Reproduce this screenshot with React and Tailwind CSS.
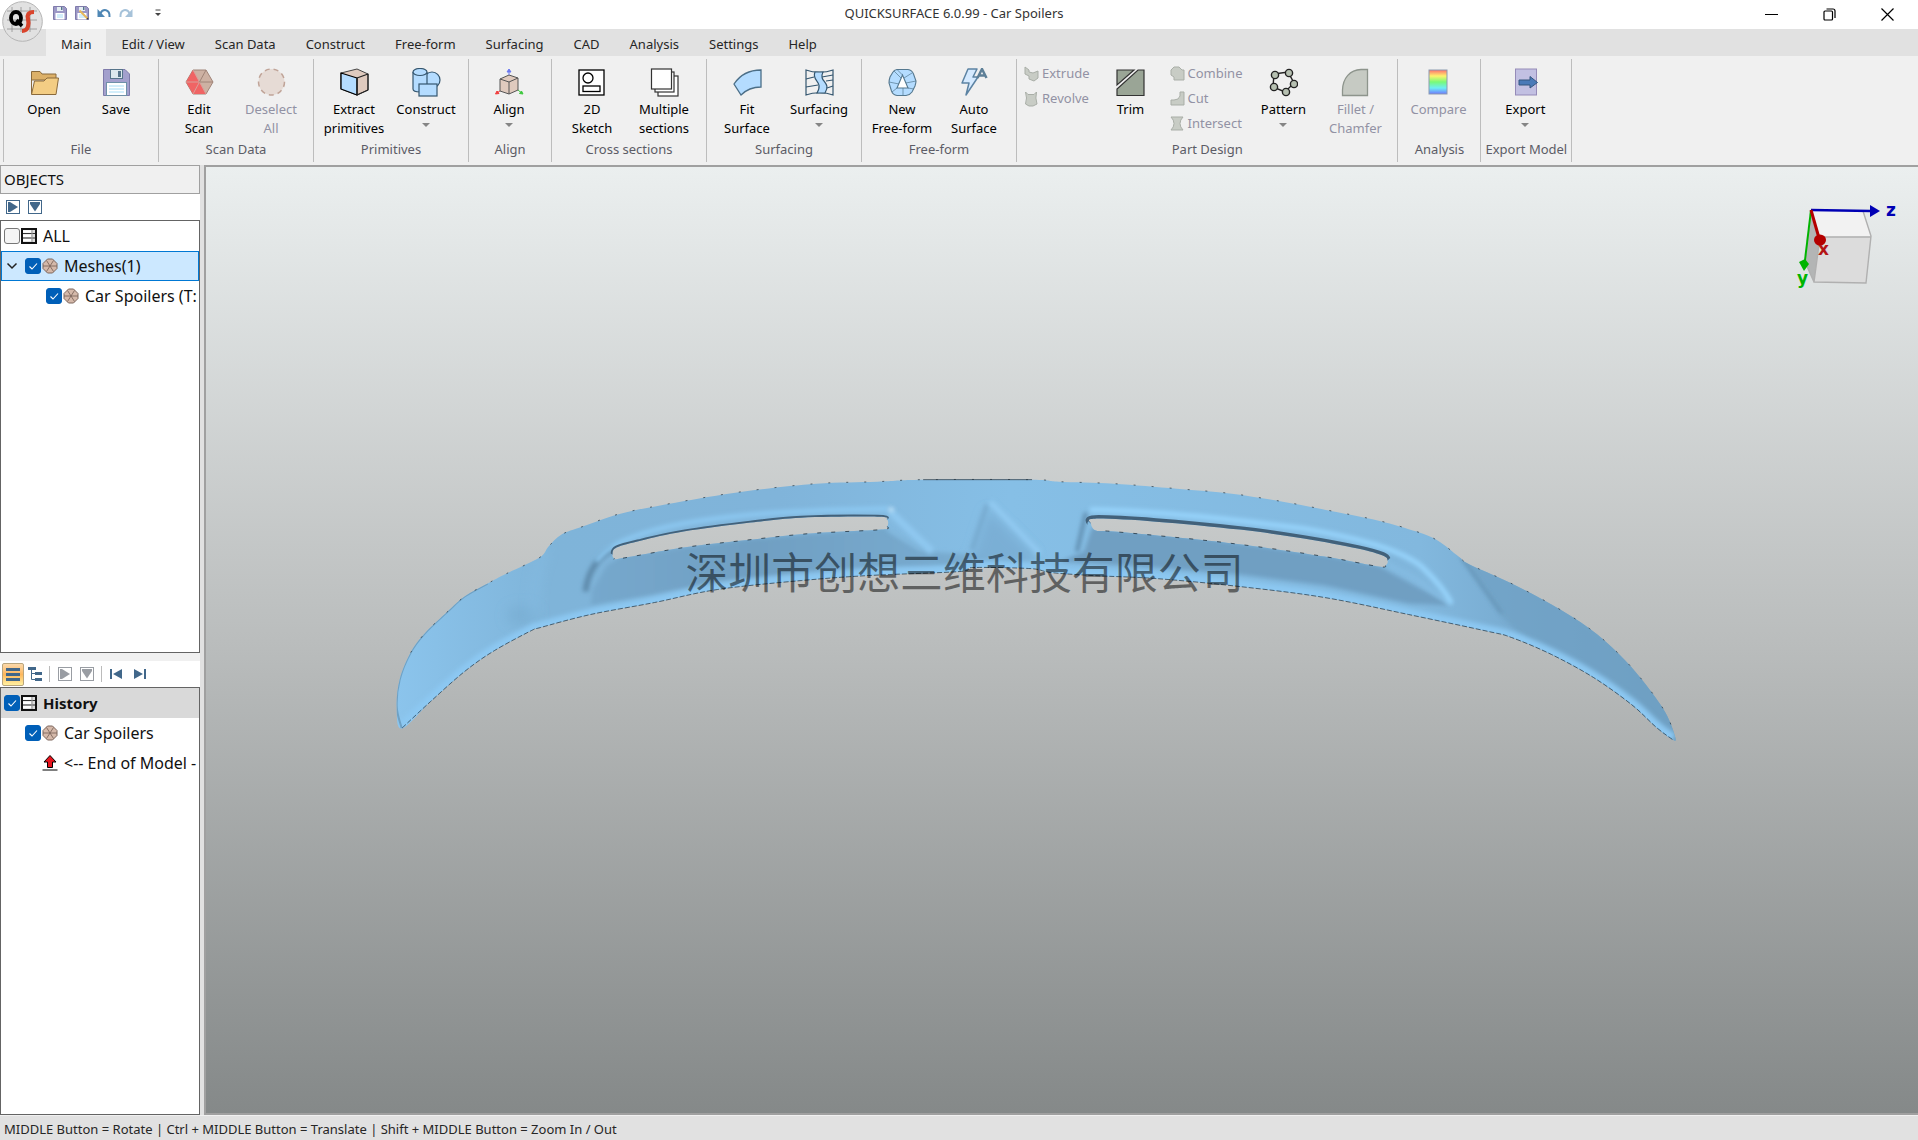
import React, { useState } from 'react';

// Smooth closed/open path through a list of points (Catmull-Rom)
const smooth = (pts, closed = false) => {
  const n = pts.length;
  const at = (i) => (closed ? pts[(i + n) % n] : pts[Math.max(0, Math.min(n - 1, i))]);
  let d = `M${pts[0][0]} ${pts[0][1]}`;
  const last = closed ? n : n - 1;
  for (let i = 0; i < last; i++) {
    const [p0, p1, p2, p3] = [at(i - 1), at(i), at(i + 1), at(i + 2)];
    const c1 = [p1[0] + (p2[0] - p0[0]) / 6, p1[1] + (p2[1] - p0[1]) / 6];
    const c2 = [p2[0] - (p3[0] - p1[0]) / 6, p2[1] - (p3[1] - p1[1]) / 6];
    d += `C${c1[0].toFixed(1)} ${c1[1].toFixed(1)} ${c2[0].toFixed(1)} ${c2[1].toFixed(1)} ${p2[0]} ${p2[1]}`;
  }
  return closed ? d + 'Z' : d;
};

const topEdge = [
  [401, 729], [396, 707], [399, 680], [410, 653], [424, 634], [447, 612], [464, 597], [487, 584], [506, 574],
  [539, 558], [548, 547], [561, 535], [582, 527], [620, 514], [675, 503], [742, 492], [816, 484], [877, 482],
  [923, 480], [1032, 480], [1059, 482], [1114, 484], [1177, 489], [1232, 494], [1283, 502], [1325, 510],
  [1379, 521], [1417, 532], [1438, 541], [1459, 557], [1470, 565], [1510, 583], [1552, 605], [1590, 629],
  [1619, 654], [1644, 682], [1666, 713], [1676, 738],
];
const bottomEdge = [
  [1673, 740], [1657, 728], [1632, 705], [1594, 678], [1552, 655], [1512, 638], [1489, 632], [1409, 615],
  [1325, 598], [1240, 587], [1156, 579], [1093, 576], [1051, 573], [1030, 569], [973, 568], [959, 572],
  [868, 576], [801, 581], [717, 590], [654, 603], [590, 615], [540, 628], [531, 631], [494, 651],
  [464, 672], [430, 702], [401, 729],
];
const leftSlotTop = [[612, 555], [616, 548], [641, 541], [683, 532], [750, 523], [801, 518], [877, 517], [887, 520]];
const leftSlotBottom = [[887, 527], [881, 530], [809, 534], [742, 541], [683, 548], [620, 559], [614, 559]];
const rightSlotTop = [[1091, 524], [1095, 519], [1156, 522], [1240, 530], [1304, 539], [1358, 549], [1383, 556], [1388, 561]];
const rightSlotBottom = [[1386, 566], [1379, 567], [1325, 557], [1257, 547], [1198, 540], [1114, 532], [1096, 531]];

const bodyPath = [
  smooth([...topEdge, ...bottomEdge.slice(0, -1)], true),
  smooth([...leftSlotTop, ...leftSlotBottom], true),
  smooth([...rightSlotTop, ...rightSlotBottom], true),
].join(' ');

const SpoilerModel = () => (
  <svg viewBox="206 167 1712 947" className="block h-full w-full" role="img" aria-label="Car Spoilers mesh">
    <defs>
      <clipPath id="body">
        <path d={bodyPath} clipRule="evenodd" />
      </clipPath>
      <linearGradient id="skin" gradientUnits="userSpaceOnUse" x1="396" y1="0" x2="1676" y2="0">
        <stop offset="0" stopColor="#8bc4ec" />
        <stop offset="0.12" stopColor="#7fb4d9" />
        <stop offset="0.3" stopColor="#80b4da" />
        <stop offset="0.48" stopColor="#86bfe6" />
        <stop offset="0.8" stopColor="#82b8de" />
        <stop offset="0.88" stopColor="#78abd0" />
        <stop offset="1" stopColor="#6e9fc1" />
      </linearGradient>
      <linearGradient id="shadeLeft" gradientUnits="userSpaceOnUse" x1="590" y1="0" x2="1000" y2="0">
        <stop offset="0" stopColor="#76a8cd" />
        <stop offset="0.4" stopColor="#709fc2" />
        <stop offset="1" stopColor="#7aaed3" />
      </linearGradient>
      <filter id="soft" filterUnits="userSpaceOnUse" x="380" y="460" width="1320" height="300"><feGaussianBlur stdDeviation="6" /></filter>
      <filter id="thin" filterUnits="userSpaceOnUse" x="380" y="460" width="1320" height="300"><feGaussianBlur stdDeviation="2" /></filter>
    </defs>
    <path d={bodyPath} fill="url(#skin)" fillRule="evenodd" />
    <g clipPath="url(#body)" fill="none">
      {/* lower blade in shade */}
      <path d="M592 590L606 566L622 556L742 540L884 528L925 552L990 556L962 566L868 568L801 573L717 582L654 595L590 606Z" fill="url(#shadeLeft)" filter="url(#thin)" />
      <path d="M1084 552L1092 528L1198 538L1325 556L1378 566L1452 606L1409 604L1325 586L1240 575L1156 568L1060 562Z" fill="#6f9fc2" filter="url(#thin)" />
      <ellipse cx="522" cy="616" rx="16" ry="10" fill="#77acd1" fillOpacity="0.6" filter="url(#soft)" />
      {/* centre */}
      <path d="M988 510L1034 555L1034 566L968 566L975 550Z" fill="#7aafd5" filter="url(#soft)" />
      <path d="M987 505L972 550" stroke="#76a9ce" strokeWidth="4" filter="url(#thin)" />
      <path d="M990 502L1040 554" stroke="#92caf2" strokeWidth="5" filter="url(#thin)" />
      {/* slot corners */}
      <path d="M890 512L932 552" stroke="#8fc8f0" strokeWidth="7" filter="url(#thin)" />
      <path d="M888 530L922 551" stroke="#83bae0" strokeWidth="3" filter="url(#thin)" />
      <path d="M1086 513L1077 552" stroke="#5f8cae" strokeWidth="4" filter="url(#thin)" />
      <path d="M614 549C598 556 587 572 585 592" stroke="#5e8bac" strokeWidth="6" filter="url(#thin)" />
      <path d="M1384 548C1420 558 1438 580 1452 604L1396 568Z" fill="#80b6dc" filter="url(#thin)" />
      <path d="M1390 566C1412 574 1430 588 1452 606" stroke="#86bde4" strokeWidth="3" filter="url(#thin)" />
      {/* bright rims over the slots */}
      <path d="M596 562C606 545 640 532 683 524C750 513 801 511 888 509" stroke="#8cc8f1" strokeWidth="5" filter="url(#thin)" />
      <path d="M1090 510C1160 511 1240 521 1304 529C1360 539 1400 550 1422 567C1438 582 1446 592 1452 604" stroke="#97d4fc" strokeWidth="5" filter="url(#thin)" />
      <circle cx="891" cy="510" r="2.500" fill="#c8e8fc" filter="url(#thin)" />
      <path d={smooth(leftSlotTop)} stroke="#42617a" strokeWidth="4" />
      <path d={smooth(rightSlotTop)} stroke="#42617a" strokeWidth="7" />
      {/* fold on the right wing */}
      <path d="M1461 556L1504 619L1520 634L1676 745L1676 700L1560 600L1470 562Z" fill="#6fa0c3" opacity="0.7" filter="url(#thin)" />
      <path d="M1462 558L1502 614" stroke="#5d8aab" strokeWidth="2" filter="url(#thin)" />
      <path d="M545 550C535 570 532 600 534 620" stroke="#86bde4" strokeWidth="4" filter="url(#soft)" />
      <path d={smooth(bottomEdge)} stroke="#8cc8f2" strokeWidth="12" filter="url(#thin)" />
      <path d={smooth(topEdge.slice(0, 8))} stroke="#6fa1c4" strokeWidth="2" />
    </g>
    <g fill="none" stroke="#24343f" strokeWidth="1">
      <path d={smooth(bottomEdge)} strokeDasharray="5 2" strokeOpacity="0.7" />
      <path d={smooth(topEdge.slice(3))} strokeDasharray="2 16" strokeOpacity="0.7" />
      <path d="M923 480H1032" strokeOpacity="0.7" />
      <path d={smooth(leftSlotBottom)} strokeDasharray="4 10" strokeOpacity="0.8" />
      <path d={smooth(rightSlotBottom)} strokeDasharray="4 10" strokeOpacity="0.8" />
    </g>
    <text x="685" y="589" fontSize="43" fill="#000" fillOpacity="0.5" className="font-['Noto_Sans_CJK_SC',sans-serif]">
      深圳市创想三维科技有限公司
    </text>
  </svg>
);

const AxisCube = () => (
  <svg viewBox="1790 195 112 100" className="absolute right-4 top-7 h-25 w-28" aria-label="View orientation">
    <path d="M1811 210L1863 211L1871 236L1820 237Z" fill="#f2f2f2" />
    <path d="M1811 210L1820 237L1814 282L1805 262Z" fill="#b3b5b5" />
    <path d="M1820 237H1871L1866 283L1814 282Z" fill="#dcdcdc" />
    <path d="M1863 211L1871 236L1866 283L1814 282L1820 237H1871M1805 262L1814 282" fill="none" stroke="#b0b0b0" strokeWidth="1.4" />
    <path d="M1811 210L1805 260" stroke="#00b400" strokeWidth="2" />
    <path d="M1799 262L1805 259L1809 264L1804 271Z" fill="#00b400" />
    <path d="M1811 210L1871 211" stroke="#0000b4" strokeWidth="2.4" />
    <path d="M1870 205L1880 211L1870 217Z" fill="#0000b4" />
    <path d="M1811 210L1819 238" stroke="#b40000" strokeWidth="3" />
    <ellipse cx="1820" cy="240" rx="6" ry="5.5" fill="#b40000" />
    <g className="font-['DejaVu_Sans',sans-serif]" fontSize="17" fontWeight="bold">
      <text x="1886" y="216" fill="#0000b4">z</text>
      <text x="1818" y="255" fill="#b41414">x</text>
      <text x="1797" y="284" fill="#00b400">y</text>
    </g>
  </svg>
);

const icons = {
  open: (
    <g stroke="#8a6a3c" strokeWidth="1">
      <path d="M1.500 26V3.500H10L12 6H26V12H1.500Z" fill="#dcb068" />
      <path d="M1.500 26.500L4.500 13H14L17 10H28.500L26 26.500Z" fill="#f3cd84" />
    </g>
  ),
  save: (
    <g>
      <path d="M1.500 1.500H23L27.500 6V27.500H1.500Z" fill="#a3a0cd" stroke="#7f7bab" />
      <rect x="8.500" y="1.500" width="12" height="9" fill="#dde8ee" stroke="#56748a" />
      <rect x="16" y="3" width="3" height="6" fill="#56748a" />
      <rect x="4.500" y="14.500" width="20" height="13" fill="#fff" stroke="#6f91a8" />
      <path d="M7 18H22M7 21H22M7 24H22" stroke="#a6dcf5" />
    </g>
  ),
  editScan: (
    <g strokeWidth="1">
      <path d="M8 2H21L28 14L21 26H8L1 14Z" fill="#cdb1a3" stroke="#a08478" />
      <path d="M8 2L14.500 14L21 26H8L1 14Z" fill="#f06464" />
      <path d="M8 2L14.500 14L8 26M1 14H14.500L21 26" fill="none" stroke="#d9a09a" />
      <path d="M21 2L14.500 14H28" fill="none" stroke="#a08478" />
    </g>
  ),
  deselect: <circle cx="14.500" cy="14" r="13" fill="#e6dbd5" stroke="#c0a498" strokeWidth="1.500" strokeDasharray="5 4" />,
  extract: (
    <g strokeLinejoin="round">
      <path d="M1 5L17 1L28 6V22L17 27L1 21Z" fill="#dfcabe" stroke="#444" />
      <path d="M1 5L17 10V27L1 21Z" fill="#b4dcff" stroke="#000" strokeWidth="1.300" />
      <path d="M17 10L28 6V22L17 27Z" fill="none" stroke="#222" strokeWidth="1.200" />
    </g>
  ),
  construct: (
    <g fill="#b4dcff" stroke="#34566f" strokeWidth="1.200">
      <circle cx="20" cy="12" r="8" />
      <path d="M1 4V21C1 25 15 25 15 21V4" />
      <ellipse cx="8" cy="4" rx="7" ry="3.500" />
      <rect x="7" y="16" width="18" height="12" />
    </g>
  ),
  align: (
    <g>
      <path d="M5 11L14 7L23 10V22L14 26L5 23Z" fill="#dfcabe" stroke="#555" />
      <path d="M5 11L14 14L23 10M14 14V26" fill="none" stroke="#555" />
      <path d="M14 7V3M14 1L16 4H12Z" fill="#6a78f0" stroke="#6a78f0" />
      <path d="M5 23L2.500 24.500M.5 26L2 23L4 25.500Z" fill="#f03c3c" stroke="#f03c3c" />
      <path d="M23 22L26 24.500M28 26L26.500 23L24.500 25.500Z" fill="#3cc83c" stroke="#3cc83c" />
    </g>
  ),
  sketch: (
    <g fill="#fff" stroke="#000" strokeWidth="1.300">
      <rect x="1" y="2" width="25" height="25" />
      <circle cx="10" cy="10" r="5" />
      <rect x="5" y="18" width="17" height="5.500" />
    </g>
  ),
  sections: (
    <g fill="#fff" stroke="#333" strokeWidth="1.200">
      <rect x="8" y="8" width="20" height="20" />
      <rect x="5" y="4" width="19" height="20" />
      <rect x="1.500" y="1" width="20" height="20" />
    </g>
  ),
  fit: <path d="M1 16C7 7 16 2 28 2V19C19 19 13 22 8 27Z" fill="#b4dcff" stroke="#4b6e87" strokeWidth="1.300" />,
  surfacing: (
    <g fill="none" stroke="#34566f" strokeWidth="1.200">
      <path d="M1 2C9 5 20 5 28 2V27C20 24 9 24 1 27Z" />
      <path d="M10 4C6 13 19 13 12 25H20C27 14 13 14 18 4Z" fill="#b4dcff" />
      <path d="M1 11L9 9M1 19L13 17M17 9L28 7M21 13L28 12M22 20L28 18" />
    </g>
  ),
  freeform: (
    <g fill="#b4dcff" stroke="#55788f" strokeWidth="1.100">
      <path d="M9 1.500H20Q24 2 25.500 6L28 13Q28 15 27 18L24 24Q22 27 18 27.500H9Q5 27 3.500 23L1 15Q1 12 2 9L5 4Q6 2 9 1.500Z" />
      <path d="M14.500 7L20 20H9Z" fill="#fff" />
      <path d="M14.500 7L9 1.500M16 10L24 5M18 15L28 13M20 20L26 21M15 20V27M9 20L4 24M11 16L1 14M13 10L6 3" fill="none" strokeWidth="0.700" />
    </g>
  ),
  auto: (
    <g>
      <path d="M8 1H17L13 9H18L6 27L9 15H2Z" fill="#d5eaff" stroke="#5c83a3" strokeWidth="1.500" strokeLinejoin="round" />
      <path d="M17.500 10L22 1L26.500 10M19 7.500H25" fill="none" stroke="#5d7f97" strokeWidth="2.500" />
    </g>
  ),
  trim: (
    <g fill="#9aa596" stroke="#333" strokeWidth="1.200">
      <path d="M1 2H18L1 17Z" />
      <path d="M28 2V27.500H1V21L22 2Z" />
    </g>
  ),
  pattern: (
    <g fill="#b6c0b1" stroke="#222" strokeWidth="1.400">
      <path d="M5 6L19 4L25 15L16 24L4 19Z" fill="none" />
      {[[6, 7], [20, 5], [25, 16], [17, 24], [5, 19]].map(([x, y]) => <circle key={x} cx={x} cy={y} r="3.600" />)}
    </g>
  ),
  fillet: <path d="M1.500 27.500V22C2 10 9 2 20 1.500H26.500V27.500Z" fill="#c6cac3" stroke="#8d948c" strokeWidth="1.300" />,
  compare: (
    <g>
      <defs>
        <linearGradient id="heat" x1="0" y1="0" x2="0" y2="1">
          <stop offset="0" stopColor="#ff6e6e" />
          <stop offset="0.25" stopColor="#fdf36e" />
          <stop offset="0.5" stopColor="#78fa78" />
          <stop offset="0.75" stopColor="#6eeef5" />
          <stop offset="1" stopColor="#6e78ff" />
        </linearGradient>
      </defs>
      <rect x="5" y="2" width="18" height="24" fill="url(#heat)" stroke="#8b9bb0" />
    </g>
  ),
  exportModel: (
    <g>
      <rect x="4.500" y="1" width="21" height="26" fill="#c2c0e2" stroke="#958bb8" />
      <path d="M8 12H19V8.500L26.500 14.500L19 20V17H8Z" fill="#4a7ab8" stroke="#34567f" />
    </g>
  ),
};

const smallIcons = {
  extrude: <path d="M1 1L5 4V6L9 7L14 5V12L10 15L5 13V10L1 8Z" />,
  revolve: <path d="M1.500 1L4 3.500H10L12.500 1Q11 7 13 13L9 15H5L1.500 13Q3.500 7 1.500 1Z" />,
  combine: <path d="M4 1H9L12 4H14V14H4V11L1 9V4Z" />,
  cut: <path d="M10 1H14V14H1V9H4Q9 9 10 5Z" />,
  intersect: <path d="M1 1H13Q10 4 10 7.500T13 14H1Q4 11 4 7.500T1 1Z" />,
};

const ribbon = [
  { name: 'File', items: [{ icon: 'open', text: ['Open'] }, { icon: 'save', text: ['Save'] }] },
  { name: 'Scan Data', items: [{ icon: 'editScan', text: ['Edit', 'Scan'] }, { icon: 'deselect', text: ['Deselect', 'All'], disabled: true }] },
  { name: 'Primitives', items: [{ icon: 'extract', text: ['Extract', 'primitives'] }, { icon: 'construct', text: ['Construct'], menu: true }] },
  { name: 'Align', items: [{ icon: 'align', text: ['Align'], menu: true }] },
  { name: 'Cross sections', items: [{ icon: 'sketch', text: ['2D', 'Sketch'] }, { icon: 'sections', text: ['Multiple', 'sections'] }] },
  { name: 'Surfacing', items: [{ icon: 'fit', text: ['Fit', 'Surface'] }, { icon: 'surfacing', text: ['Surfacing'], menu: true }] },
  { name: 'Free-form', items: [{ icon: 'freeform', text: ['New', 'Free-form'] }, { icon: 'auto', text: ['Auto', 'Surface'] }] },
  {
    name: 'Part Design',
    items: [
      { stack: [['extrude', 'Extrude'], ['revolve', 'Revolve']] },
      { icon: 'trim', text: ['Trim'] },
      { stack: [['combine', 'Combine'], ['cut', 'Cut'], ['intersect', 'Intersect']] },
      { icon: 'pattern', text: ['Pattern'], menu: true },
      { icon: 'fillet', text: ['Fillet /', 'Chamfer'], disabled: true },
    ],
  },
  { name: 'Analysis', items: [{ icon: 'compare', text: ['Compare'], disabled: true }] },
  { name: 'Export Model', items: [{ icon: 'exportModel', text: ['Export'], menu: true }] },
];

const tabs = ['Main', 'Edit / View', 'Scan Data', 'Construct', 'Free-form', 'Surfacing', 'CAD', 'Analysis', 'Settings', 'Help'];

const RibbonButton = ({ icon, text, menu, disabled }) => (
  <button disabled={disabled} className="flex w-18 flex-col items-center leading-[19px] text-black disabled:text-[#9292a4]">
    <svg viewBox="0 0 29 29" className="mb-[3px] h-[29px] w-[29px]">{icons[icon]}</svg>
    {text.map((line) => <span key={line}>{line}</span>)}
    {menu && <span className="mt-1 border-x-4 border-t-4 border-x-transparent border-t-[#858585]" />}
  </button>
);

const ButtonStack = ({ items }) => (
  <div className="-mt-[7px] flex flex-col pl-[3px] pr-[5px]">
    {items.map(([icon, label]) => (
      <button key={label} disabled className="flex h-[25px] items-center gap-[3px] text-[#9292a4]">
        <svg viewBox="0 0 15 16" className="h-4 w-[15px]" fill="#c8ccc5" stroke="#a9aea7">{smallIcons[icon]}</svg>
        {label}
      </button>
    ))}
  </div>
);

const RibbonGroup = ({ name, items }) => (
  <section className="flex flex-col items-center justify-between border-r border-[#bdbdbd] px-[3px]">
    <div className="flex flex-1 pl-px pr-[3px] pt-[9px]">
      {items.map((item, i) => (item.stack
        ? <ButtonStack key={i} items={item.stack} />
        : <RibbonButton key={item.icon} {...item} />))}
    </div>
    <div className="px-px pb-1 leading-[18px] text-[#5c5c66]">{name}</div>
  </section>
);

const SaveGlyph = ({ edit }) => (
  <svg viewBox="0 0 14 14" className="h-[14px] w-[14px]">
    <path d="M.5.5H11.500L13.500 2.500V13.500H.5Z" fill="#9c98c6" stroke="#7f7bab" />
    <rect x="4" y="1" width="6" height="4" fill="#e4edf2" />
    <rect x="8" y="1" width="1.500" height="3" fill="#56748a" />
    <rect x="2.500" y="7" width="9" height="6.500" fill="#fff" />
    <path d="M4 9H10M4 11H10" stroke="#a6dcf5" />
    {edit && <path d="M4.500 4.500L12.500 12.500" stroke="#e8b75a" strokeWidth="2" />}
    {edit && <path d="M11.500 13L13.500 13.500L13 11.500Z" fill="#333" />}
  </svg>
);

const UndoGlyph = () => (
  <svg viewBox="0 0 14 12" className="h-3 w-[14px]" fill="none">
    <path d="M3 7C6 1 13 2 12.500 10" stroke="#4f87b5" strokeWidth="2" />
    <path d="M.5 2V10H8Z" fill="#4f87b5" />
  </svg>
);

const Logo = () => (
  <svg viewBox="0 0 42 42" className="absolute left-[2px] top-px z-10 h-[42px] w-[42px]">
    <circle cx="20.500" cy="20.500" r="19.800" fill="#e1e1e1" stroke="#b5b5b5" />
    <path d="M10 6V31M19 6V31M28 6V31M5 10H35M5 19H35M5 28H35" stroke="#8f8f8f" strokeWidth="0.800" />
    <ellipse cx="14" cy="17" rx="5" ry="6" fill="none" stroke="#000" strokeWidth="3.800" />
    <path d="M14.500 19L20 25" stroke="#000" strokeWidth="3.600" />
    <path d="M32 11C26 11 25 14 26 18S27 30 20 30" fill="none" stroke="#d9442c" strokeWidth="4.200" />
  </svg>
);

const TitleBar = () => (
  <header className="grid h-[29px] shrink-0 grid-cols-[1fr_auto_1fr] items-center bg-white pr-[10px]">
    <div className="flex items-center gap-2 pb-[3px] pl-[53px]">
      <button aria-label="Save"><SaveGlyph /></button>
      <button aria-label="Save as"><SaveGlyph edit /></button>
      <button aria-label="Undo"><UndoGlyph /></button>
      <button aria-label="Redo" className="-scale-x-100 opacity-50"><UndoGlyph /></button>
      <button aria-label="Customize toolbar" className="ml-3.5">
        <svg viewBox="0 0 6 8" className="h-2 w-[6px]"><path d="M.5 1H5.500" stroke="#444" /><path d="M0 4H6L3 7Z" fill="#444" /></svg>
      </button>
    </div>
    <h1 className="pb-0.5 text-[#333]">QUICKSURFACE 6.0.99 - Car Spoilers</h1>
    <div className="flex items-center justify-end gap-[45px] pr-[14px]">
      <button aria-label="Minimize"><svg viewBox="0 0 13 13" className="h-[13px] w-[13px]"><path d="M0 6.500H13" stroke="#000" /></svg></button>
      <button aria-label="Restore">
        <svg viewBox="0 0 13 13" className="h-[13px] w-[13px]" fill="none" stroke="#000" strokeWidth="1.200">
          <rect x="1" y="3" width="8.500" height="9" rx="1" />
          <path d="M3.500 1H10Q12 1 12 3V10" />
        </svg>
      </button>
      <button aria-label="Close"><svg viewBox="0 0 13 13" className="h-[13px] w-[13px]"><path d="M.5.5L12.500 12.500M12.500.5L.5 12.500" stroke="#000" strokeWidth="1.200" /></svg></button>
    </div>
  </header>
);

const CheckBox = ({ label, checked, onChange }) => (
  <span className="relative h-4 w-4 shrink-0">
    <input
      type="checkbox"
      aria-label={label}
      checked={checked}
      onChange={onChange}
      className="peer block h-4 w-4 appearance-none rounded-[3px] border border-[#777] bg-[#f5f5f5] checked:border-[#005fb8] checked:bg-[#005fb8]"
    />
    <svg viewBox="0 0 16 16" className="pointer-events-none absolute inset-0 hidden h-4 w-4 peer-checked:block">
      <path d="M4.500 8.500L7 11L12 5.500" fill="none" stroke="#fff" strokeWidth="1.100" />
    </svg>
  </span>
);

const ListGlyph = () => (
  <svg viewBox="0 0 16 16" className="h-4 w-4 shrink-0">
    <rect x="1" y="1" width="14" height="14" fill="#ddd" stroke="#111" strokeWidth="2" />
    <path d="M2 3.500H10M2 7.800H10M2 12H10" stroke="#fff" strokeWidth="2.500" />
    <path d="M2 5.500H14M2 10H14" stroke="#333" />
    <path d="M11 2V14" stroke="#999" />
  </svg>
);

const MeshGlyph = () => (
  <svg viewBox="0 0 16 16" className="h-4 w-4 shrink-0" stroke="#7d665c">
    <path d="M5.500 1H10.500L15 5.500V10.500L10.500 15H5.500L1 10.500V5.500Z" fill="#d5b9aa" />
    <path d="M1 8H15M4.500 2.500L11.500 13.500M11.500 2.500L4.500 13.500" strokeWidth="0.900" />
  </svg>
);

const EndGlyph = () => (
  <svg viewBox="0 0 16 16" className="h-4 w-4 shrink-0" stroke="#000">
    <path d="M8 .5L14 7H10.500V12.500H5.500V7H2Z" fill="#e8141e" />
    <path d="M.5 15H15.500" />
  </svg>
);

const BoxedArrow = ({ down, muted }) => (
  <svg viewBox="0 0 14 14" className={`h-[14px] w-[14px] ${muted ? 'text-[#999da3]' : 'text-[#41678a]'}`}>
    <rect x=".5" y=".5" width="13" height="13" fill="#fff" stroke="currentColor" />
    <path d={down ? 'M2 2H12V4L7 11.500L2 4Z' : 'M2 2H4L12 7L4 12H2Z'} fill="currentColor" />
  </svg>
);

const Skip = ({ flip }) => (
  <svg viewBox="0 0 12 10" className={`h-[10px] w-3 ${flip ? '-scale-x-100' : ''}`} fill="#41678a">
    <rect width="2" height="10" />
    <path d="M12 0V10L3 5Z" />
  </svg>
);

const Sidebar = () => {
  const [checks, setChecks] = useState({ all: false, meshes: true, mesh: true, history: true, step: true });
  const box = (key, label) => (
    <CheckBox label={label} checked={checks[key]} onChange={() => setChecks((prev) => ({ ...prev, [key]: !prev[key] }))} />
  );
  const row = 'flex h-[30px] items-center gap-px whitespace-nowrap';

  return (
    <aside className="flex w-[200px] shrink-0 flex-col overflow-hidden bg-white text-[#111]">
      <h2 className="h-[29px] shrink-0 border border-[#a0a0a0] bg-[#f0f0f0] pl-[3px] text-[15px] leading-[27px]">OBJECTS</h2>
      <div className="flex h-[26px] shrink-0 items-center gap-2 pl-[6px]">
        <button aria-label="Expand"><BoxedArrow /></button>
        <button aria-label="Collapse"><BoxedArrow down /></button>
      </div>
      <ul className="h-[433px] shrink-0 overflow-hidden border border-[#646464] text-base">
        <li className={`${row} pl-[3px]`}>{box('all', 'ALL')}<ListGlyph /><span className="pl-[5px]">ALL</span></li>
        <li className={`${row} border border-[#0078d4] bg-[#cce8ff] pl-1`}>
          <svg viewBox="0 0 12 8" className="mr-[6px] h-2 w-3"><path d="M1.500 1.500L6 6L10.500 1.500" fill="none" stroke="#222" strokeWidth="1.500" /></svg>
          {box('meshes', 'Meshes(1)')}<MeshGlyph /><span className="pl-[5px]">Meshes(1)</span>
        </li>
        <li className={`${row} pl-[45px]`}>{box('mesh', 'Car Spoilers mesh')}<MeshGlyph /><span className="pl-[5px]">Car Spoilers (T:</span></li>
      </ul>
      <div className="h-2 shrink-0 bg-[#f0f0f0]" />
      <div className="flex h-[26px] shrink-0 items-center pl-[2px]">
        <button aria-label="List view" className="flex h-[23px] w-[22px] items-center justify-center rounded-xs border border-[#b9a57d] bg-linear-to-b from-[#fbd9ab] via-[#fdb75c] to-[#fff0a0]">
          <svg viewBox="0 0 14 13" className="h-[13px] w-[14px]"><path d="M0 1.500H14M0 6.500H14M0 11.500H14" stroke="#41678a" strokeWidth="3" /></svg>
        </button>
        <button aria-label="Tree view" className="ml-1">
          <svg viewBox="0 0 14 14" className="h-[14px] w-[14px]" stroke="#41678a" fill="none">
            <path d="M0 1.500H8M7 6.500H14M7 12.500H14" strokeWidth="3" /><path d="M3.500 2V12.500H8M3.500 6.500H8" />
          </svg>
        </button>
        <span className="ml-[7px] mr-2 h-4 w-px bg-[#bbb]" />
        <div className="flex gap-2">
          <button aria-label="Expand history" disabled><BoxedArrow muted /></button>
          <button aria-label="Collapse history" disabled><BoxedArrow down muted /></button>
        </div>
        <span className="ml-[7px] mr-2 h-4 w-px bg-[#bbb]" />
        <div className="flex gap-3">
          <button aria-label="First step"><Skip /></button>
          <button aria-label="Last step"><Skip flip /></button>
        </div>
      </div>
      <ul className="flex-1 overflow-hidden border border-[#646464] text-base">
        <li className={`${row} bg-[#d9d9d9] pl-[3px] text-[15px] font-bold`}>{box('history', 'History')}<ListGlyph /><span className="pl-[5px]">History</span></li>
        <li className={`${row} pl-6`}>{box('step', 'Car Spoilers')}<MeshGlyph /><span className="pl-[5px]">Car Spoilers</span></li>
        <li className={`${row} pl-[41px]`}><EndGlyph /><span className="pl-[5px]">&lt;-- End of Model -</span></li>
      </ul>
    </aside>
  );
};

const App = () => {
  const [activeTab, setActiveTab] = useState('Main');

  return (
    <div className="relative flex h-screen flex-col overflow-hidden bg-[#f0f0f0] font-['Noto_Sans','Open_Sans',sans-serif] text-[13px]">
      <Logo />
      <TitleBar />
      <nav className="flex h-[27px] shrink-0 bg-[#e1e1e1] pl-[46px]">
        {tabs.map((tab) => (
          <button
            key={tab}
            onClick={() => setActiveTab(tab)}
            className={`px-[15px] pt-1 text-[#262626] ${tab === activeTab ? 'bg-[#f0f0f0]' : ''}`}
          >
            {tab}
          </button>
        ))}
      </nav>
      <div className="flex h-[109px] shrink-0 py-[3px] pl-[3px]">
        <div className="flex border-l border-[#bdbdbd]">
          {ribbon.map((group) => <RibbonGroup key={group.name} {...group} />)}
        </div>
      </div>
      <div className="flex min-h-0 flex-1">
        <Sidebar />
        <div className="w-1 shrink-0 bg-[#e1e1e1]" />
        <main className="relative min-w-0 flex-1 border-2 border-r-0 border-[#a0a0a0] bg-linear-to-b from-[#ebefef] via-[#babdbd] to-[#858989]">
          <SpoilerModel />
          <AxisCube />
        </main>
      </div>
      <footer className="mt-px h-6 shrink-0 bg-[#e1e1e1] pl-1 pt-px leading-6 text-[#262626]">
        MIDDLE Button = Rotate | Ctrl + MIDDLE Button = Translate | Shift + MIDDLE Button = Zoom In / Out
      </footer>
    </div>
  );
};

export default App;
